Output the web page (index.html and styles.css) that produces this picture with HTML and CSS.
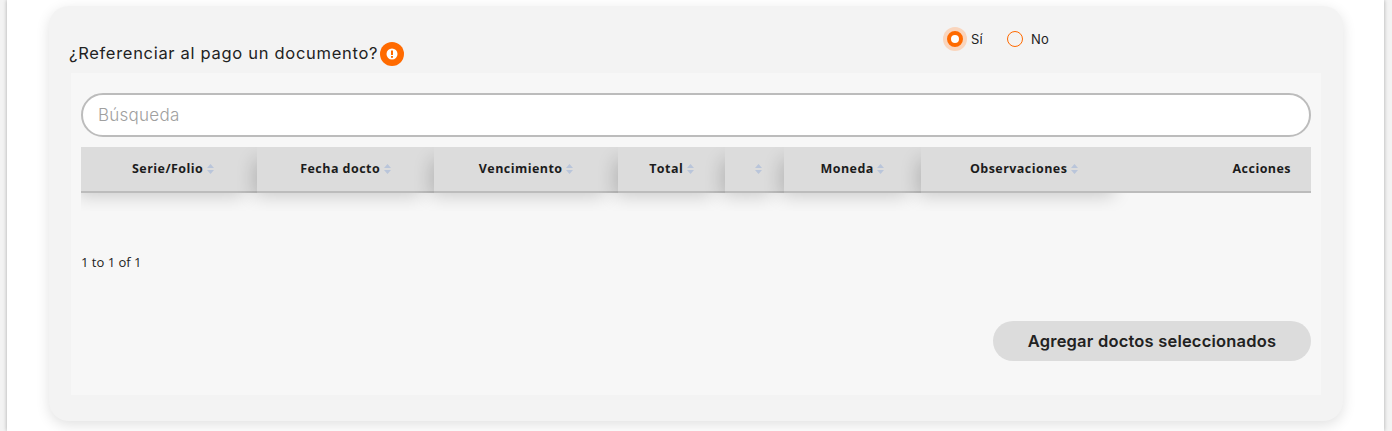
FILE: index.html
```html
<!DOCTYPE html>
<html lang="es">
<head>
  <meta charset="UTF-8">
  <title>Referenciar documento</title>
  <link rel="stylesheet" href="styles.css">
</head>
<body>
  <svg class="defs" width="0" height="0">
    <symbol id="sort" viewBox="0 0 7 10">
      <polygon points="3.5,0 7,4 0,4"/>
      <polygon points="0,6 7,6 3.5,10"/>
    </symbol>
  </svg>

  <div class="page">
    <section class="card">
      <div class="pregunta">
        <h3 class="pregunta-titulo">¿Referenciar al pago un documento?
          <svg class="alerta" viewBox="0 0 24 24">
            <circle cx="12" cy="12" r="12" fill="#ff6a00"/>
            <circle cx="12" cy="12" r="5.5" fill="#fff"/>
            <rect x="11" y="8.5" width="2" height="4.5" fill="#ff6a00"/>
            <rect x="11" y="14" width="2" height="1.8" fill="#ff6a00"/>
          </svg>
        </h3>
        <div class="radios">
          <label class="radio">
            <span class="radio-marca activo"></span>Sí
          </label>
          <label class="radio">
            <span class="radio-marca"></span>No
          </label>
        </div>
      </div>

      <div class="panel">
        <input class="busqueda" type="text" placeholder="Búsqueda">

        <div class="tabla-wrap">
          <table class="tabla">
            <thead>
              <tr>
                <th class="col-serie">Serie/Folio <svg class="orden"><use href="#sort"/></svg></th>
                <th class="col-fecha">Fecha docto <svg class="orden"><use href="#sort"/></svg></th>
                <th class="col-venc">Vencimiento <svg class="orden"><use href="#sort"/></svg></th>
                <th class="col-total">Total <svg class="orden"><use href="#sort"/></svg></th>
                <th class="col-vacia"><svg class="orden"><use href="#sort"/></svg></th>
                <th class="col-moneda">Moneda <svg class="orden"><use href="#sort"/></svg></th>
                <th class="col-obs">Observaciones <svg class="orden"><use href="#sort"/></svg></th>
                <th class="col-acciones">Acciones</th>
              </tr>
            </thead>
          </table>
        </div>

        <p class="paginas">1 to 1 of 1</p>

        <div class="acciones">
          <button class="btn-agregar" type="button">Agregar doctos seleccionados</button>
        </div>
      </div>
    </section>
  </div>
</body>
</html>
```

FILE: styles.css
```css
* { box-sizing: border-box; }

html, body {
  height: 100%;
}

body {
  margin: 0;
  background-color: #f3f3f3;
  font-family: "Inter", "Open Sans", sans-serif;
  color: #222;
  overflow: hidden;
}

.defs {
  display: block;
  height: 0;
}

.page {
  width: 1377px;
  height: 431px;
  margin-left: 7px;
  padding: 6px 41px 0 42px;
  background: #fff;
  box-shadow: 0 0 4px rgba(0, 0, 0, 0.3);
}

.card {
  height: 415px;
  padding: 0 22px;
  background: #f3f3f3;
  border-radius: 20px;
  box-shadow: 0 4px 14px rgba(0, 0, 0, 0.12);
}

.pregunta {
  display: flex;
  height: 67px;
}

.pregunta-titulo {
  display: flex;
  align-items: center;
  gap: 2px;
  width: 874px;
  height: 24px;
  margin: 35px 0 0 -2px;
  font-size: 16.5px;
  font-weight: 400;
  letter-spacing: 0.7px;
  white-space: nowrap;
}

.alerta {
  width: 24px;
  height: 24px;
  flex: none;
  margin-top: 2px;
}

.radios {
  display: flex;
  gap: 20px;
  margin-top: 21px;
  height: 24px;
}

.radio {
  display: flex;
  align-items: center;
  font-size: 13px;
  letter-spacing: 0.2px;
}

.radio-marca {
  width: 16px;
  height: 16px;
  margin: 0 8px 0 4px;
  border: 1.5px solid #ff6a00;
  border-radius: 50%;
}

.radio-marca.activo {
  border: 4.5px solid #ff6a00;
  background: #fff;
  box-shadow: 0 0 0 4px #f9d5bd;
}

.panel {
  height: 322px;
  padding: 20px 10px 0;
  background: #f7f7f7;
}

.busqueda {
  display: block;
  width: 100%;
  height: 44px;
  padding: 0 15px;
  background: #fff;
  border: 2px solid #bcbcbc;
  border-radius: 22px;
  font-family: inherit;
  font-size: 17px;
  letter-spacing: 0.25px;
  outline: none;
}

.busqueda::placeholder {
  color: #a0a0a0;
  font-weight: 300;
}

.tabla-wrap {
  height: 64px;
  margin-top: 10px;
  overflow: hidden;
}

.tabla {
  width: 100%;
  table-layout: fixed;
  border-collapse: separate;
  border-spacing: 0;
}

.tabla th {
  height: 46px;
  padding: 0 0 2px 0;
  background: #dcdcdc;
  border-bottom: 2px solid #bcbcbc;
  box-shadow: -8px 8px 18px -5px rgba(0, 0, 0, 0.18);
  font-family: "Open Sans", sans-serif;
  font-size: 12.5px;
  font-weight: 700;
  letter-spacing: 0.45px;
  color: #1c1c1c;
  text-align: center;
}

.orden {
  width: 7px;
  height: 10px;
  fill: #b9c5da;
  vertical-align: -1px;
}

.col-serie { width: 176px; padding-left: 8px !important; }
.col-fecha { width: 177px; }
.col-venc { width: 184px; }
.col-total { width: 107px; }
.col-vacia { width: 59px; padding-left: 7px !important; }
.col-moneda { width: 137px; }
.col-obs { width: 206px; }

.tabla .col-acciones {
  padding-right: 20px;
  text-align: right;
  box-shadow: none;
}

.paginas {
  height: 24px;
  margin: 0;
  padding-top: 42px;
  font-family: "Open Sans", sans-serif;
  font-size: 13px;
  line-height: 18px;
}

.acciones {
  display: flex;
  justify-content: flex-end;
  margin-top: 68px;
}

.btn-agregar {
  width: 318px;
  height: 40px;
  background: #dcdcdc;
  border: none;
  border-radius: 20px;
  font-family: inherit;
  font-size: 16.5px;
  font-weight: 600;
  letter-spacing: 0.2px;
  color: #222;
}
```
